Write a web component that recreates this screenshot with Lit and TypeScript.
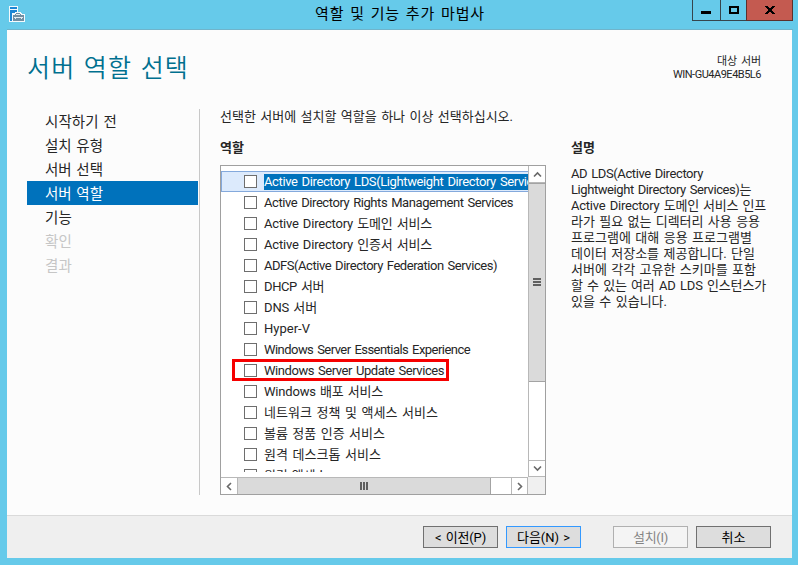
import { LitElement, html, css, svg } from "lit";
import { customElement, property } from "lit/decorators.js";
import { classMap } from "lit/directives/class-map.js";

/** A single line of text tracked so that it spans a given width. */
@customElement("tracked-text")
class TrackedText extends LitElement {
  @property({ type: Number }) span = 0;
  @property() text = "";

  static styles = css`
    :host { display: inline-block; white-space: pre; }
    .t { display: inline-block; white-space: pre; word-spacing: 1.2px; }
  `;

  updated() {
    const el = this.renderRoot.querySelector(".t") as HTMLElement;
    el.style.letterSpacing = "0px";
    if (!this.span) return;
    const natural = el.getBoundingClientRect().width;
    el.style.letterSpacing = `${(this.span - natural) / this.text.length}px`;
  }

  render() {
    return html`<span class="t">${this.text}</span>`;
  }
}

const line = (text: string, span: number) =>
  html`<tracked-text .text=${text} .span=${span}></tracked-text>`;

const STEPS: [string, number, string][] = [
  ["시작하기 전", 72, ""],
  ["설치 유형", 58, ""],
  ["서버 선택", 58, ""],
  ["서버 역할", 58, "current"],
  ["기능", 27, ""],
  ["확인", 27, "disabled"],
  ["결과", 27, "disabled"],
];

const ROLES: [string, number][] = [
  ["Active Directory LDS(Lightweight Directory Services)", 286],
  ["Active Directory Rights Management Services", 249],
  ["Active Directory 도메인 서비스", 168],
  ["Active Directory 인증서 서비스", 168],
  ["ADFS(Active Directory Federation Services)", 233],
  ["DHCP 서버", 60],
  ["DNS 서버", 53],
  ["Hyper-V", 46],
  ["Windows Server Essentials Experience", 206],
  ["Windows Server Update Services", 180],
  ["Windows 배포 서비스", 119],
  ["네트워크 정책 및 액세스 서비스", 174],
  ["볼륨 정품 인증 서비스", 121],
  ["원격 데스크톱 서비스", 117],
  ["원격 액세스", 63],
];

const DESCRIPTION: [string, number][] = [
  ["AD LDS(Active Directory", 132],
  ["Lightweight Directory Services)는", 180],
  ["Active Directory 도메인 서비스 인프", 195],
  ["라가 필요 없는 디렉터리 사용 응용", 189],
  ["프로그램에 대해 응용 프로그램별", 181],
  ["데이터 저장소를 제공합니다. 단일", 184],
  ["서버에 각각 고유한 스키마를 포함", 185],
  ["할 수 있는 여러 AD LDS 인스턴스가", 195],
  ["있을 수 있습니다.", 96],
];

const chevron = (d: string) => html`
  <svg width="9" height="9" viewBox="0 0 9 9">
    ${svg`<path d=${d} fill="none" stroke="#686868" stroke-width="1.6" />`}
  </svg>`;

@customElement("app-root")
class AppRoot extends LitElement {
  static styles = css`
    :host {
      display: block;
      width: 798px;
      height: 565px;
      overflow: hidden;
      font-family: Roboto, "Noto Sans CJK KR", sans-serif;
      font-size: 13px;
      color: #262626;
    }
    * { box-sizing: border-box; }
    svg { display: block; }
    .window {
      display: flex;
      flex-direction: column;
      width: 798px;
      height: 565px;
      padding: 0 7px 7px;
      background: #66caea;
    }
    .titlebar {
      display: grid;
      grid-template-columns: 1fr auto 1fr;
      height: 30px;
      flex: none;
      margin-right: -2px;
      border-bottom: 1px solid #70b4cb;
    }
    .app-icon { margin: 6px 0 0 2px; }
    .caption { font-size: 15px; line-height: 28px; color: #000; }
    .controls { display: flex; justify-content: flex-end; height: 21px; }
    .ctl {
      display: flex;
      align-items: center;
      justify-content: center;
      height: 21px;
      border: 1px solid #36454c;
      border-top: 0;
    }
    .min { width: 29px; }
    .max { width: 25px; border-left: 0; border-right: 0; }
    .close { width: 47px; background: #c45a50; border-color: #5c302c; }
    .client {
      display: flex;
      flex-direction: column;
      flex: 1;
      width: 785px;
      margin-right: -1px;
      background: #fcfcfc;
    }
    .header {
      display: flex;
      justify-content: space-between;
      height: 79px;
      padding: 0 31px 0 20px;
    }
    .heading { font-size: 25px; line-height: 36px; padding-top: 21px; color: #00708f; font-weight: 350; }
    .target {
      display: flex;
      flex-direction: column;
      align-items: flex-end;
      padding-top: 25px;
      font-size: 11px;
      line-height: 13px;
    }
    .body { display: flex; height: 406px; }
    .steps {
      width: 193px;
      height: 386px;
      padding-left: 20px;
      padding-right: 1px;
      border-right: 1px solid #c8c8c8;
      font-size: 14.5px;
    }
    .step { height: 24px; line-height: 24px; padding: 2px 0 0 18px; }
    .current { background: #0072bc; color: #fff; }
    .disabled { color: #c6c6c6; }
    .roles { width: 326px; margin-left: 20px; }
    .intro { height: 30px; line-height: 14px; padding-top: 1px; }
    .label { height: 26px; line-height: 16px; padding-top: 1px; font-weight: 600; }
    .box {
      display: grid;
      grid-template-columns: 307px 17px;
      grid-template-rows: 311px 17px;
      width: 326px;
      height: 330px;
      border: 1px solid #a0a0a0;
      background: #fff;
    }
    .items { height: 306px; padding-top: 5px; overflow: hidden; }
    .item {
      display: flex;
      align-items: center;
      height: 21px;
      padding-left: 23px;
      position: relative;
      white-space: nowrap;
    }
    .item .name { display: flex; align-items: center; height: 16px; margin-left: 7px; line-height: 16px; }
    .check { flex: none; width: 13px; height: 13px; border: 1px solid #6e6e6e; background: #fff; }
    .selected {
      padding-left: 22px;
      border: 1px solid #84a9dc;
      border-right: 0;
      background: #dceafc;
    }
    .selected .name { background: #0072bc; color: #fff; }
    .mark {
      position: absolute;
      left: 11px;
      top: -1px;
      width: 217px;
      height: 22px;
      border: 3px solid #f60000;
    }
    .vbar, .hbar { display: flex; background: #fff; }
    .vbar { flex-direction: column; border-left: 1px solid #b8b8b8; }
    .hbar { border-top: 1px solid #b8b8b8; }
    .arrow { display: flex; align-items: center; justify-content: center; flex: none; }
    .vbar .arrow { height: 17px; }
    .hbar .arrow { width: 17px; }
    .up { border-bottom: 1px solid #b8b8b8; }
    .down { margin-top: auto; border-top: 1px solid #b8b8b8; border-bottom: 1px solid #b8b8b8; }
    .left { border-right: 1px solid #b8b8b8; }
    .right { margin-left: auto; border-left: 1px solid #b8b8b8; border-right: 1px solid #b8b8b8; }
    .thumb {
      display: flex;
      align-items: center;
      justify-content: center;
      background: #dadada;
      border: 1px solid #a3a3a3;
    }
    .vbar .thumb { height: 199px; border-left: 0; border-right: 0; }
    .hbar .thumb { width: 253px; border-left: 0; border-top: 0; border-bottom: 0; }
    .corner { background: #f0f0f0; }
    .info { margin-left: 25px; padding-top: 30px; }
    .desc { display: flex; flex-direction: column; padding-top: 1px; }
    .desc > * { height: 16px; line-height: 16px; }
    .footer {
      display: flex;
      flex: 1;
      align-items: flex-start;
      padding: 10px 0 0 416px;
      background: #efefef;
      border-top: 1px solid #dadada;
    }
    .btn {
      display: flex;
      align-items: center;
      justify-content: center;
      width: 75px;
      height: 22px;
      margin-right: 8px;
      padding-top: 1px;
      border: 1px solid #707070;
      background: #dddddd;
      color: #000;
      line-height: 18px;
    }
    .primary { border-color: #3399ff; margin-right: 32px; }
    .off { border-color: #b0b0b0; background: #f4f4f4; color: #838383; }
  `;

  render() {
    return html`
      <div class="window">
        <div class="titlebar">
          <svg class="app-icon" width="16" height="16" viewBox="0 0 16 16" shape-rendering="crispEdges">
            <path d="M0 0H9V6H12V7H13V8H16V16H0Z" fill="#f4fafd" />
            <path d="M1 1H8V3H1ZM1 4H8V6H6V7H3V15H1Z" fill="#1c86d4" />
            <path d="M7 7H11V8H12V9H15V15H4V9H6V8H7Z" fill="#718fa3" />
            <path d="M7 8H11V9H7Z" fill="#e4edf2" />
            <path d="M5 11H14V12H13V13H12V12H7V13H6V12H5Z" fill="#e4edf2" />
          </svg>
          <div class="caption">${line("역할 및 기능 추가 마법사", 170)}</div>
          <div class="controls">
            <div class="ctl min">
              <svg width="11" height="9" viewBox="0 0 11 9"><path d="M0 5H10V8H0Z" /></svg>
            </div>
            <div class="ctl max">
              <svg width="10" height="8" viewBox="0 0 10 8">
                <path d="M0 0H10V8H0ZM2 2V6H8V2Z" fill-rule="evenodd" />
              </svg>
            </div>
            <div class="ctl close">
              <svg width="10" height="8" viewBox="0 0 10 8" shape-rendering="crispEdges">
                <path d="M0 0H3V1H4V2H6V1H7V0H10V1H9V2H8V3H7V5H8V6H9V7H10V8H7V7H6V6H4V7H3V8H0V7H1V6H2V5H3V3H2V2H1V1H0Z" />
              </svg>
            </div>
          </div>
        </div>
        <div class="client">
          <div class="header">
            <div class="heading">${line("서버 역할 선택", 162)}</div>
            <div class="target">
              ${line("대상 서버", 44)}
              ${line("WIN-GU4A9E4B5L6", 88)}
            </div>
          </div>
          <div class="body">
            <div class="steps">
              ${STEPS.map(([t, w, c]) => html`<div class="step ${c}">${line(t, w)}</div>`)}
            </div>
            <div class="roles">
              <div class="intro">${line("선택한 서버에 설치할 역할을 하나 이상 선택하십시오.", 293)}</div>
              <div class="label">${line("역할", 24)}</div>
              <div class="box">
                <div class="items">
                  ${ROLES.map(
                    ([t, w], i) => html`
                      <div class=${classMap({ item: true, selected: i === 0 })}>
                        <span class="check"></span>
                        <span class="name">${line(t, w)}</span>
                        ${i === 9 ? html`<span class="mark"></span>` : ""}
                      </div>`
                  )}
                </div>
                <div class="vbar">
                  <div class="arrow up">${chevron("M1 6.5L4.5 3L8 6.5")}</div>
                  <div class="thumb">
                    <svg width="8" height="9" viewBox="0 0 8 9"><path d="M0 0H8V2H0ZM0 3H8V5H0ZM0 6H8V8H0Z" fill="#606060" /></svg>
                  </div>
                  <div class="arrow down">${chevron("M1 2.5L4.5 6L8 2.5")}</div>
                </div>
                <div class="hbar">
                  <div class="arrow left">${chevron("M6 1L2.5 4.5L6 8")}</div>
                  <div class="thumb">
                    <svg width="9" height="8" viewBox="0 0 9 8"><path d="M0 0H2V8H0ZM3 0H5V8H3ZM6 0H8V8H6Z" fill="#606060" /></svg>
                  </div>
                  <div class="arrow right">${chevron("M3 1L6.5 4.5L3 8")}</div>
                </div>
                <div class="corner"></div>
              </div>
            </div>
            <div class="info">
              <div class="label">${line("설명", 24)}</div>
              <div class="desc">${DESCRIPTION.map(([t, w]) => line(t, w))}</div>
            </div>
          </div>
          <div class="footer">
            <div class="btn">${line("< 이전(P)", 51)}</div>
            <div class="btn primary">${line("다음(N) >", 53)}</div>
            <div class="btn off">${line("설치(I)", 35)}</div>
            <div class="btn">${line("취소", 24)}</div>
          </div>
        </div>
      </div>
    `;
  }
}
